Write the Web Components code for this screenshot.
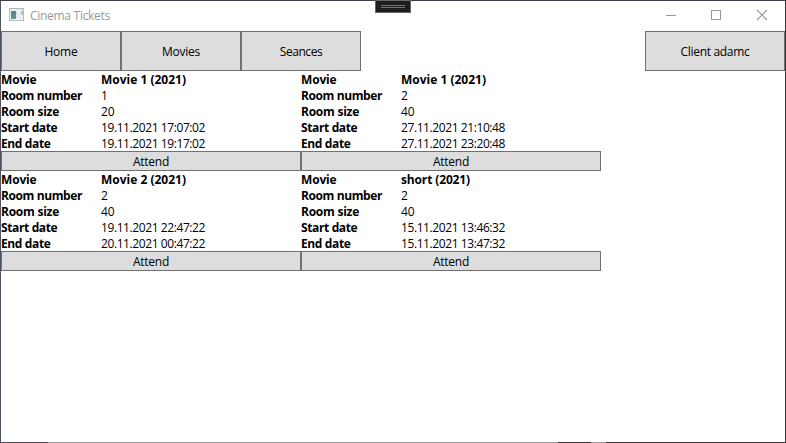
<!DOCTYPE html>
<html lang="en">
<head>
<meta charset="utf-8">
<title>Cinema Tickets</title>
<style>
html,body{margin:0;height:100%;overflow:hidden;background:#fff}
body{font:12px/16px "Open Sans","Noto Sans",sans-serif;color:#000}
</style>
</head>
<body>
<app-window></app-window>
<script>
// A single line of text spread over a given width.
class TextRun extends HTMLElement{
  connectedCallback(){
    this.attachShadow({mode:'open'}).innerHTML=`<style>:host{display:inline-block;white-space:pre}span{display:inline-block}</style><span></span>`;
    const s=this.shadowRoot.querySelector('span'),t=this.getAttribute('text'),w=+this.getAttribute('w');
    s.textContent=t;
    if(w){
      const n=s.getBoundingClientRect().width;
      s.style.letterSpacing=((w-n)/t.length).toFixed(3)+'px';
      this.style.width=w+'px';
    }
  }
}
customElements.define('text-run',TextRun);

class PushButton extends HTMLElement{
  connectedCallback(){
    this.attachShadow({mode:'open'}).innerHTML=`<style>
      :host{display:flex;box-sizing:border-box;align-items:center;justify-content:center;padding-top:2px;background:#ddd;border:1px solid #707070}
      </style><slot></slot>`;
  }
}
customElements.define('push-button',PushButton);

class SeanceCard extends HTMLElement{
  connectedCallback(){
    const a=n=>this.getAttribute(n);
    const rows=[['Movie',35.5,a('movie'),a('mw')],['Room number',81,a('room'),7],['Room size',58,a('size'),13.4],['Start date',56.3,a('start'),104],['End date',49.5,a('end'),104]];
    this.attachShadow({mode:'open'}).innerHTML=`<style>
      :host{display:block;width:300px;height:100px}
      .row{display:grid;grid-template-columns:100px 1fr;height:16px;line-height:17px}
      .b{font-weight:700}
      push-button{height:20px}
      </style>${rows.map((r,i)=>`<div class="row"><text-run class="b" text="${r[0]}" w="${r[1]}"></text-run><text-run class="${i?'':'b'}" text="${r[2]}" w="${r[3]}"></text-run></div>`).join('')}
      <push-button><text-run text="Attend" w="36"></text-run></push-button>`;
  }
}
customElements.define('seance-card',SeanceCard);

class TitleBar extends HTMLElement{
  connectedCallback(){
    this.attachShadow({mode:'open'}).innerHTML=`<style>
      :host{display:flex;height:30px;align-items:center;color:#999}
      svg{display:block}
      .app{margin:-2px 5px 0 8px}
      .ctl{margin-left:auto}
      </style>
      <svg class="app" width="16" height="14" viewBox="0 0 16 14" shape-rendering="crispEdges">
        <defs><linearGradient id="g" x1="0" y1="0" x2="0" y2="1"><stop stop-color="#527d9a"/><stop offset="1" stop-color="#60a080"/></linearGradient></defs>
        <path fill="#b5b9bd" d="M0 0h15v13H0z"/><path fill="#dfe3e7" d="M1 1h13v1H1z"/><path fill="#f0f3f5" d="M1 2h13v10H1z"/>
        <path fill="url(#g)" d="M2 3h5v8H2z"/><path fill="#dde8ec" d="M7 3h2v8H7z"/><path fill="#e4ebf1" d="M10 3h2v8h-2z"/><path fill="#a5c9b5" d="M12 3h2v4h-2z"/>
      </svg>
      <text-run text="Cinema Tickets" w="80"></text-run>
      <svg class="ctl" width="120" height="30" fill="none" stroke="#999">
        <path d="M1 14.5h10M46.5 9.5h9v9h-9z" shape-rendering="crispEdges"/><path d="M92 9l10 10M102 9l-10 10" stroke-width="1.1"/>
      </svg>`;
  }
}
customElements.define('title-bar',TitleBar);

class DebugHandle extends HTMLElement{
  connectedCallback(){
    this.attachShadow({mode:'open'}).innerHTML=`<style>
      :host{position:absolute;left:374px;top:-1px;width:36px;height:13px;box-sizing:border-box;border:1px solid #666;background:#1e1e1e;display:flex;flex-direction:column;align-items:center;padding-top:4px;gap:1px}
      i{width:24px;height:1px;background:#717171}
      </style><i></i><i></i>`;
  }
}
customElements.define('debug-handle',DebugHandle);

class AppWindow extends HTMLElement{
  connectedCallback(){
    this.attachShadow({mode:'open'}).innerHTML=`<style>
      :host{display:flex;flex-direction:column;position:relative;box-sizing:border-box;width:786px;height:443px;border:1px solid #3d3d47;border-left-color:#505562;border-right-color:#343436;border-bottom:0}
      nav{display:flex;height:40px}
      nav push-button{width:120px}
      nav .client{width:140px;margin-left:auto}
      main{display:grid;grid-template-columns:300px 300px;grid-auto-rows:100px;flex:1}
      footer{height:1px;background:linear-gradient(90deg,#514b53 47px,#999 47px 557px,#373337 557px 590px,#a19c9b 590px 605px,#373337 605px)}
      </style>
      <title-bar></title-bar>
      <nav>
        <push-button><text-run text="Home" w="33"></text-run></push-button>
        <push-button><text-run text="Movies" w="38"></text-run></push-button>
        <push-button><text-run text="Seances" w="42.5"></text-run></push-button>
        <push-button class="client"><text-run text="Client adamc" w="69"></text-run></push-button>
      </nav>
      <main>
        <seance-card movie="Movie 1 (2021)" mw="85" room="1" size="20" start="19.11.2021 17:07:02" end="19.11.2021 19:17:02"></seance-card>
        <seance-card movie="Movie 1 (2021)" mw="85" room="2" size="40" start="27.11.2021 21:10:48" end="27.11.2021 23:20:48"></seance-card>
        <seance-card movie="Movie 2 (2021)" mw="85" room="2" size="40" start="19.11.2021 22:47:22" end="20.11.2021 00:47:22"></seance-card>
        <seance-card movie="short (2021)" mw="69" room="2" size="40" start="15.11.2021 13:46:32" end="15.11.2021 13:47:32"></seance-card>
      </main>
      <footer></footer>
      <debug-handle></debug-handle>`;
  }
}
customElements.define('app-window',AppWindow);
</script>
</body>
</html>
